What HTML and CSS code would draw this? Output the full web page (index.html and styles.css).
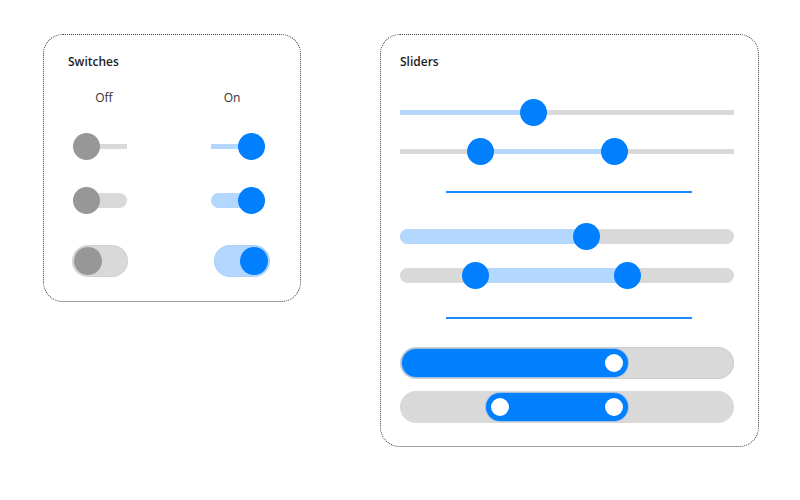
FILE: index.html
```html
<!DOCTYPE html>
<html lang="en">
  <head>
    <meta charset="UTF-8" />
    <meta name="viewport" content="width=device-width, initial-scale=1.0" />
    <title>Controls</title>
    <link rel="stylesheet" href="styles.css">
  </head>
  <body>
    <main class="page">
      <!-- Switches -->
      <section class="card switches">
        <h2 class="cardTitle">Switches</h2>
        <div class="switchGrid">
          <div class="switchRow labels">
            <span>Off</span>
            <span>On</span>
          </div>
          <div class="switchRow">
            <div class="switch line"><span class="knob"></span></div>
            <div class="switch line on"><span class="knob"></span></div>
          </div>
          <div class="switchRow">
            <div class="switch bar"><span class="knob"></span></div>
            <div class="switch bar on"><span class="knob"></span></div>
          </div>
          <div class="switchRow large">
            <div class="switch pill"><span class="knob"></span></div>
            <div class="switch pill on"><span class="knob"></span></div>
          </div>
        </div>
      </section>

      <!-- Sliders -->
      <section class="card sliders">
        <h2 class="cardTitle">Sliders</h2>

        <div class="sliderGroup first">
          <div class="slider thin">
            <div class="fill" style="left: 0; width: 40%"></div>
            <span class="thumb" style="left: 40%"></span>
          </div>
          <div class="slider thin">
            <div class="fill" style="left: 24.1%; width: 40.1%"></div>
            <span class="thumb" style="left: 24.1%"></span>
            <span class="thumb" style="left: 64.2%"></span>
          </div>
        </div>

        <div class="divider"></div>

        <div class="sliderGroup second">
          <div class="slider thick">
            <div class="fill" style="left: 0; width: 55.9%"></div>
            <span class="thumb" style="left: 55.9%"></span>
          </div>
          <div class="slider thick">
            <div class="fill" style="left: 22.7%; width: 45.5%"></div>
            <span class="thumb" style="left: 22.7%"></span>
            <span class="thumb" style="left: 68.2%"></span>
          </div>
        </div>

        <div class="divider lower"></div>

        <div class="sliderGroup">
          <div class="slider block shadowed">
            <div class="fill end" style="left: 2px; width: calc(68.3% - 2px)">
              <span class="dot"></span>
            </div>
          </div>
          <div class="slider block">
            <div class="fill" style="left: 25.8%; width: 42.5%">
              <span class="dot"></span>
              <span class="dot"></span>
            </div>
          </div>
        </div>
      </section>
    </main>
  </body>
</html>
```

FILE: styles.css
```css
body {
  margin: 0;
  padding: 0;
  background: #ffffff;
  font-family: "Open Sans", "Noto Sans", sans-serif;
  color: #222;
}

.page {
  display: flex;
  align-items: flex-start;
  gap: 79px;
  padding: 34px 0 0 43px;
}

/* ===== cards ===== */
.card {
  border: 1px dotted #3c3c3c;
  border-radius: 20px;
  box-sizing: border-box;
}

.cardTitle {
  margin: 0;
  font-size: 12px;
  line-height: 16px;
  font-weight: 600;
  color: #1e1e1e;
}

.switches {
  width: 258px;
  padding: 19px 24px 24px 24px;
}

.sliders {
  width: 379px;
  padding: 19px 24px 23px 19px;
}

/* ===== switches ===== */
.switchGrid {
  display: flex;
  flex-direction: column;
  gap: 27px;
  margin-top: 20px;
}

.switchRow {
  display: grid;
  grid-template-columns: 72px 72px;
  column-gap: 56px;
  align-items: center;
}

.switchRow.large {
  margin-top: 4px;
}

.labels span {
  text-align: center;
  font-size: 12px;
  line-height: 16px;
  color: #333;
}

.switch {
  position: relative;
  display: flex;
  align-items: center;
  width: 54px;
  height: 27px;
  margin-left: 5px;
}

.switch.on {
  justify-self: end;
  justify-content: flex-end;
  margin-left: 0;
  margin-right: 3px;
}

.knob {
  position: relative;
  width: 27px;
  height: 27px;
  border-radius: 50%;
  background: #979797;
}

.switch.on .knob {
  background: #007fff;
}

.switch.line:before,
.switch.bar:before {
  content: "";
  position: absolute;
  left: 0;
  right: 0;
  top: 11px;
  height: 5px;
  background: #d9d9d9;
}

.switch.bar:before {
  top: 6px;
  height: 15px;
  border-radius: 8px;
}

.switch.on:before {
  background: #b3d7ff;
}

.switch.pill {
  width: 56px;
  height: 32px;
  padding: 2px;
  box-sizing: border-box;
  border-radius: 16px;
  background: #d9d9d9;
  box-shadow: inset 0 0 2px rgba(0, 0, 0, 0.12);
  margin-left: 4px;
}

.switch.pill.on {
  background: #b3d7ff;
  box-shadow: inset 0 0 2px rgba(0, 90, 200, 0.15);
  margin-right: -2px;
}

.switch.pill .knob {
  width: 28px;
  height: 28px;
}

/* ===== sliders ===== */
.sliderGroup {
  display: flex;
  flex-direction: column;
  gap: 12px;
  margin-top: 28px;
}

.sliderGroup.first {
  margin-top: 29px;
}

.sliderGroup.second {
  margin-top: 30px;
}

.slider {
  position: relative;
  height: 27px;
}

.slider.thin:before,
.slider.thick:before {
  content: "";
  position: absolute;
  left: 0;
  right: 0;
  top: 11px;
  height: 5px;
  background: #d9d9d9;
}

.slider.thin .fill {
  position: absolute;
  top: 11px;
  height: 5px;
  background: #b3d7ff;
}

.slider.thick:before {
  top: 6px;
  height: 15px;
  border-radius: 8px;
}

.slider.thick .fill {
  position: absolute;
  top: 6px;
  height: 15px;
  background: #b3d7ff;
  border-radius: 8px;
}

.thumb {
  position: absolute;
  top: 0;
  width: 27px;
  height: 27px;
  margin-left: -13.5px;
  border-radius: 50%;
  background: #007fff;
}

.divider {
  height: 2px;
  width: 246px;
  margin: 26px 0 0 46px;
  background: #1a8aff;
}

.divider.lower {
  margin-top: 28px;
}

.slider.block {
  height: 32px;
  border-radius: 16px;
  background: #d9d9d9;
}

.slider.block.shadowed {
  box-shadow: inset 0 0 2px rgba(0, 0, 0, 0.18);
}

.slider.block .fill {
  position: absolute;
  top: 2px;
  height: 28px;
  box-sizing: border-box;
  padding: 0 5px;
  display: flex;
  align-items: center;
  justify-content: space-between;
  border-radius: 14px;
  background: #007fff;
  box-shadow: 0 0 0 1px rgba(0, 127, 255, 0.25);
}

.slider.block .fill.end {
  justify-content: flex-end;
}

.dot {
  width: 18px;
  height: 18px;
  border-radius: 50%;
  background: #ffffff;
}
```
